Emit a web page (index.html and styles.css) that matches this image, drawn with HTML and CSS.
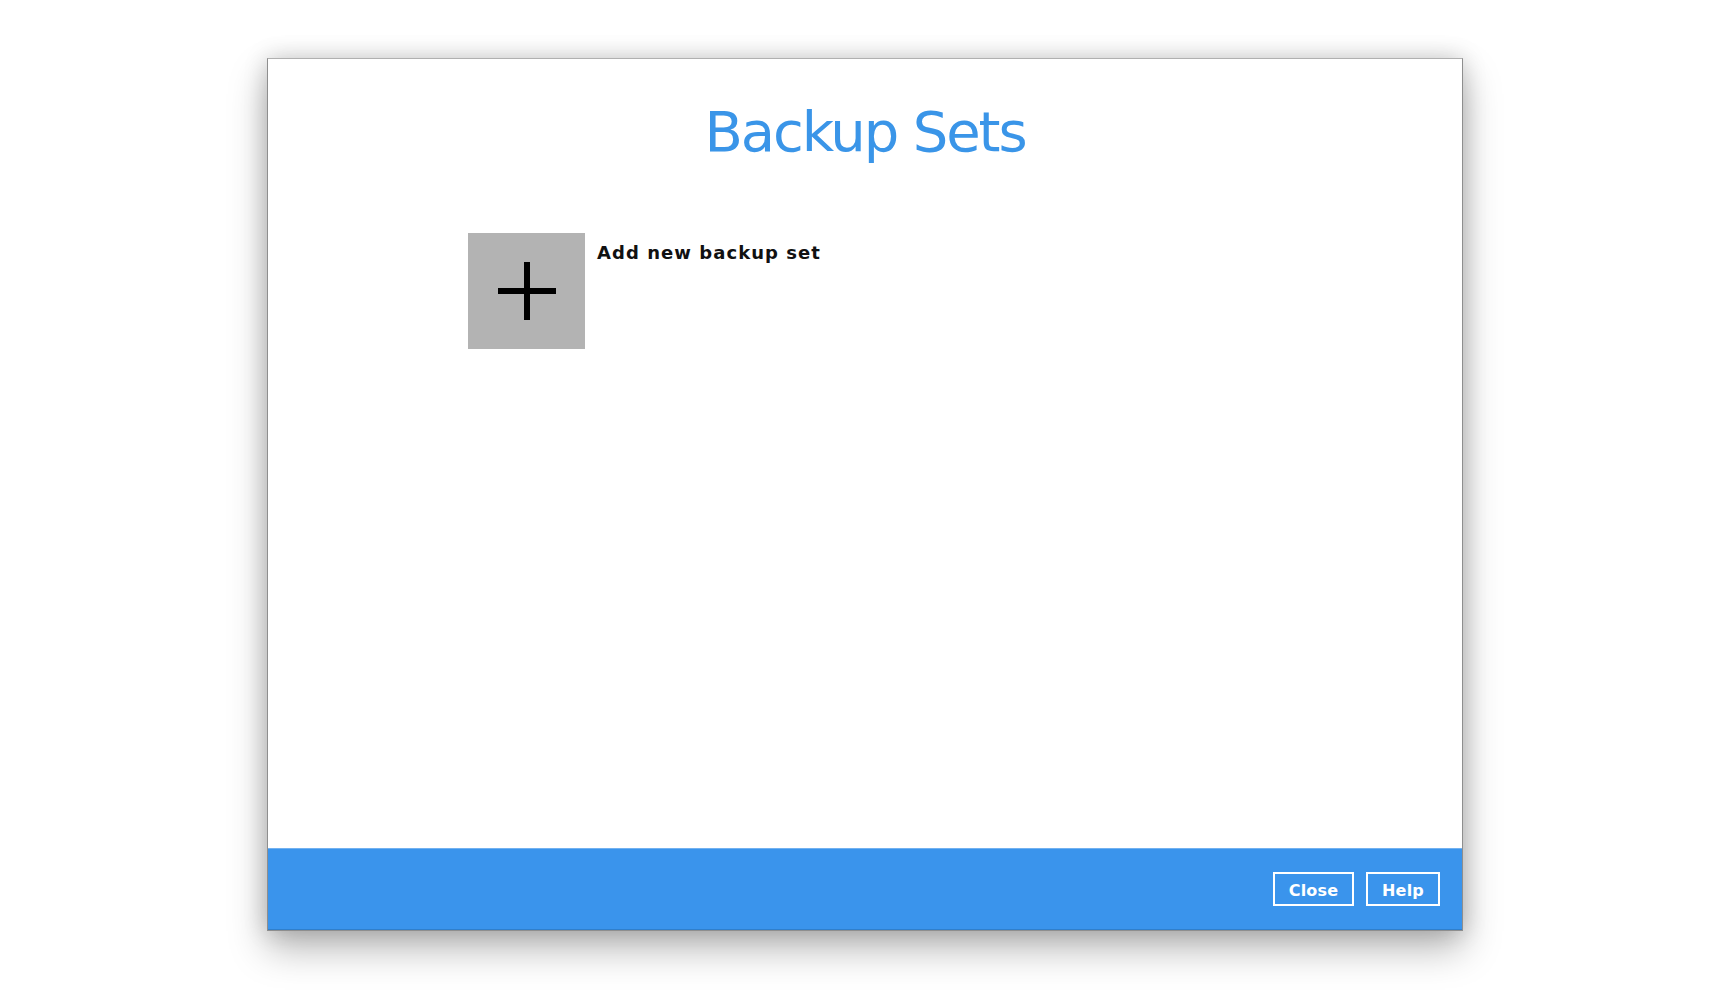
FILE: index.html
```html
<!DOCTYPE html>
<html>
<head>
<meta charset="utf-8">
<link rel="stylesheet" href="styles.css">
</head>
<body>
<div class="stage">
  <div class="window">
    <div class="main">
      <h1 class="title">Backup Sets</h1>
      <div class="sets">
        <div class="set-item">
          <div class="add-tile">
            <svg width="60" height="60" viewBox="0 0 60 60"><rect x="27" y="1" width="6" height="58" fill="#000"/><rect x="1" y="27" width="58" height="6" fill="#000"/></svg>
          </div>
          <div class="set-label">Add new backup set</div>
        </div>
      </div>
    </div>
    <div class="footer">
      <button class="btn btn-close">Close</button>
      <button class="btn btn-help">Help</button>
    </div>
  </div>
</div>
</body>
</html>
```
FILE: styles.css
```css
html, body {
  margin: 0;
  padding: 0;
  background: #ffffff;
}
.stage {
  width: 1728px;
  height: 1008px;
  padding-top: 58px;
  padding-left: 2px;
  box-sizing: border-box;
  display: flex;
  justify-content: center;
  align-items: flex-start;
}
.window {
  width: 1196px;
  height: 873px;
  box-sizing: border-box;
  border: 1px solid #8e8e8e;
  border-top-color: #b0b0b0;
  background: #ffffff;
  display: flex;
  flex-direction: column;
  box-shadow: 0 18px 36px rgba(0,0,0,0.28), 0 0 22px rgba(0,0,0,0.18);
}
.main {
  flex: 1;
  display: flex;
  flex-direction: column;
}
.title {
  margin: 0;
  padding-top: 40px;
  text-align: center;
  font-family: "DejaVu Sans", sans-serif;
  font-weight: normal;
  font-size: 56px;
  letter-spacing: -2.1px;
  line-height: 66px;
  color: #3a95e8;
}
.sets {
  padding-top: 68px;
  padding-left: 200px;
}
.set-item {
  display: flex;
  align-items: flex-start;
  gap: 12px;
}
.add-tile {
  width: 117px;
  height: 116px;
  background: #b3b3b3;
  display: flex;
  align-items: center;
  justify-content: center;
}
.set-label {
  font-family: "DejaVu Sans", sans-serif;
  font-weight: bold;
  font-size: 18px;
  letter-spacing: 1.05px;
  color: #111;
  line-height: 22px;
  padding-top: 9px;
}
.footer {
  height: 82px;
  flex: none;
  background: #3a94ec;
  border-top: 1px solid #72b1f0;
  border-bottom: 1px solid #2f7fcc;
  box-sizing: border-box;
  display: flex;
  justify-content: flex-end;
  align-items: flex-start;
  gap: 12px;
  padding: 23px 22px 0 0;
}
.btn {
  height: 34px;
  box-sizing: border-box;
  border: 2px solid #ffffff;
  background: transparent;
  color: #ffffff;
  font-family: "DejaVu Sans", sans-serif;
  font-weight: bold;
  font-size: 16px;
  padding: 3px 0 0 0;
  letter-spacing: 0.2px;
}
.btn-close { width: 81px; }
.btn-help { width: 74px; }
```
